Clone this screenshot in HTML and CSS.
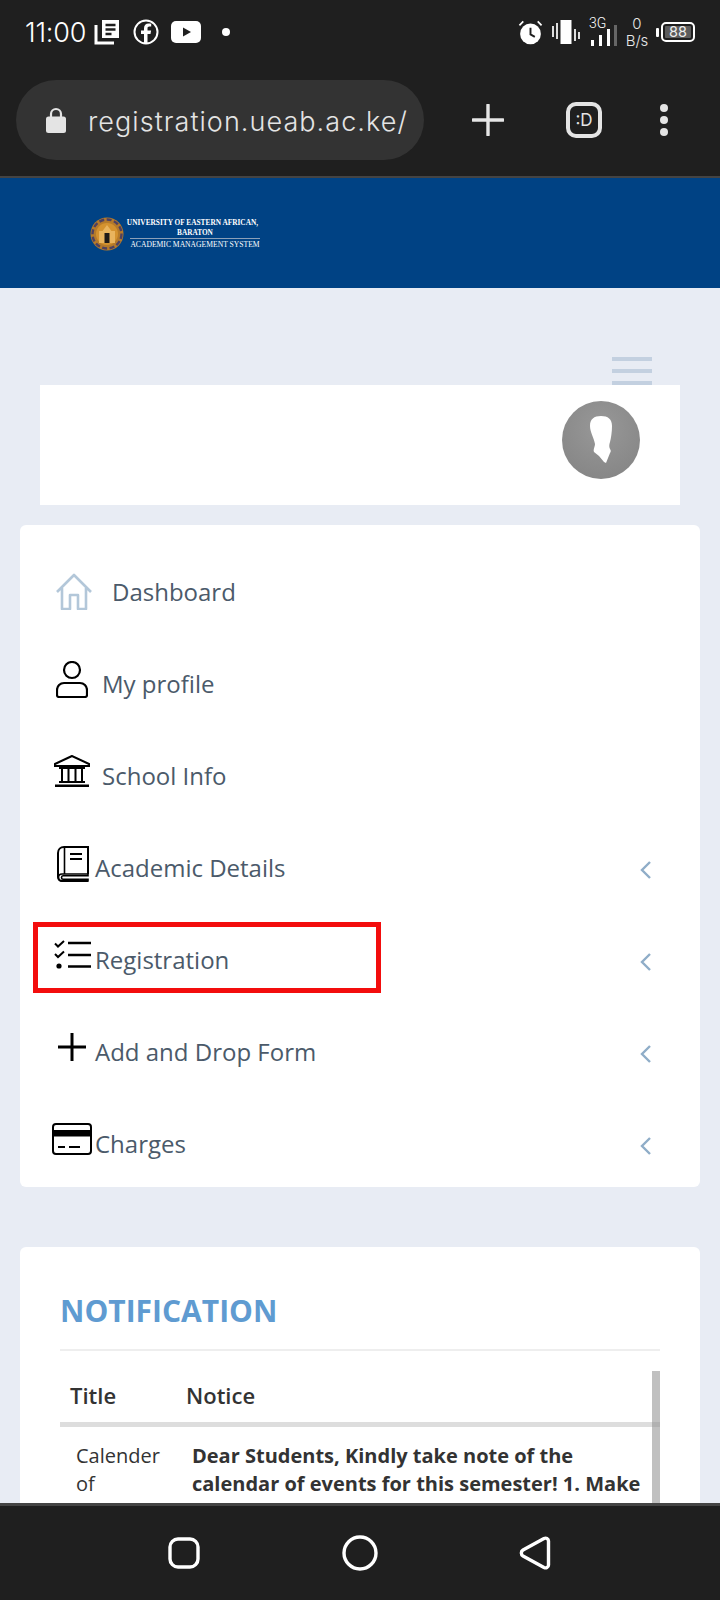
FILE: index.html
```html
<!DOCTYPE html>
<html lang="en">
<head>
<meta charset="utf-8">
<title>UEAB Academic Management System</title>
<link rel="stylesheet" href="styles.css">
</head>
<body>
<div class="screen">
  <header class="chrome">
    <div class="status">
      <div class="status-left">
        <span class="time">11:00</span>
        <svg class="st-news" viewBox="0 0 26 26"><path d="M8 1h17v18H8z" fill="#fff"/><path d="M11.500 6h10M11.500 10.500h10M11.500 15h6" stroke="#1f1f1f" stroke-width="2.400"/><path d="M2 6v18h18" fill="none" stroke="#fff" stroke-width="3"/></svg>
        <svg class="st-fb" viewBox="0 0 26 26"><circle cx="13" cy="13" r="11.500" fill="none" stroke="#fff" stroke-width="2"/><path d="M14.500 25V15h3l.6-3.500h-3.600V9.500c0-1.200.5-1.900 1.900-1.900h1.800V4.700c-.8-.1-1.700-.2-2.500-.2-2.900 0-4.700 1.700-4.700 4.700v2.300H8V15h3v10z" fill="#fff"/></svg>
        <svg class="st-yt" viewBox="0 0 30 22"><rect width="30" height="22" rx="5" fill="#fff"/><path d="M12 6.500l8 4.500-8 4.500z" fill="#1f1f1f"/></svg>
        <span class="st-dot"></span>
      </div>
      <div class="status-right">
        <svg class="st-alarm" viewBox="0 0 26 26"><circle cx="13" cy="14.500" r="10.800" fill="#fff"/><path d="M13 8v7l4.500 2.500" fill="none" stroke="#1f1f1f" stroke-width="2"/><path d="M1.500 5.500L5.500 1.500M24.500 5.500L20.500 1.500" stroke="#fff" stroke-width="1.800"/></svg>
        <svg class="st-vib" viewBox="0 0 28 26"><path d="M8.500 1h11v24h-11z" fill="#fff"/><path d="M0 7h2v11H0zM4 4h2v16H4zM22 10h2v12h-2zM26 13h2v7h-2z" fill="#ddd"/></svg>
        <div class="st-net">
          <span class="st-3g">3G</span>
          <svg class="st-bars" viewBox="0 0 28 21"><path d="M2 15h3v6H2zM10 10h3v11h-3zM18 4h3v17h-3z" fill="#fff"/><path d="M25 0h3v21h-3z" fill="#666"/></svg>
        </div>
        <div class="st-speed"><span>0</span><span>B/s</span></div>
        <div class="st-batt"><span class="st-nub"></span><span class="st-cell"><span class="st-level">88</span></span></div>
      </div>
    </div>
    <div class="toolbar">
      <div class="urlbar">
        <svg class="lock" viewBox="0 0 20 26"><path d="M5 11V7a5 5 0 0 1 10 0v4" fill="none" stroke="#e4e4e4" stroke-width="2.200"/><rect y="9.500" width="20" height="16.500" rx="2.500" fill="#e4e4e4"/></svg>
        <span class="url">registration.ueab.ac.ke/</span>
      </div>
      <svg class="tb-plus" viewBox="0 0 32 32"><path d="M16 1v30M1 16h30" stroke="#e6e6e6" stroke-width="3.400" stroke-linecap="round"/></svg>
      <div class="tab-count"><span>:D</span></div>
      <div class="tb-menu"><i></i><i></i><i></i></div>
    </div>
  </header>

  <div class="banner">
    <div class="logo">
      <svg class="seal" viewBox="0 0 34 34"><circle cx="17" cy="17" r="16.500" fill="#b57a2a"/><circle cx="17" cy="17" r="14.500" fill="none" stroke="#4f4160" stroke-width="2.400" stroke-dasharray="5 2.500"/><circle cx="17" cy="17" r="11" fill="#d4922f"/><path d="M9 26V14h3.500L17 8l4.500 6H25v12z" fill="#e9b45e"/><path d="M14.500 26v-10h5v10z" fill="#1f1a17"/></svg>
      <div class="logo-text">
        <span class="logo-l1">UNIVERSITY OF EASTERN AFRICAN,</span>
        <span class="logo-l2">BARATON</span>
        <span class="logo-l3">ACADEMIC MANAGEMENT SYSTEM</span>
      </div>
    </div>
  </div>

  <main class="page">
    <div class="topbar">
      <div class="burger"><i></i><i></i><i></i></div>
      <div class="user-card">
        <div class="avatar">
          <svg viewBox="0 0 78 78"><path d="M28 25c0-7 4-10 11-10s11 3 11 10c0 6-1 12-2 16-1 3-1 5 0 7 1 1 1 3 0 4l-4 10-2-1-5-6-5-4c-1-3 1-5 1-8-1-6-5-12-5-18z" fill="#fff"/></svg>
        </div>
      </div>
    </div>

    <nav class="menu">
      <a class="row">
        <svg class="ico ico-home" viewBox="0 0 36 37"><path d="M1 19L18 2l17 17M6 15v21h8V22h8v14h8V15" fill="none" stroke="#b3c7d9" stroke-width="2.600" stroke-linejoin="round"/></svg>
        <span class="lbl">Dashboard</span>
      </a>
      <a class="row">
        <svg class="ico ico-person" viewBox="0 0 32 37"><circle cx="16" cy="9" r="8" fill="none" stroke="#000" stroke-width="2.200"/><path d="M8 22h16a7 7 0 0 1 7 7v5a2 2 0 0 1-2 2H3a2 2 0 0 1-2-2v-5a7 7 0 0 1 7-7z" fill="none" stroke="#000" stroke-width="2.200"/></svg>
        <span class="lbl">My profile</span>
      </a>
      <a class="row">
        <svg class="ico ico-school" viewBox="0 0 36 32"><path d="M18 1L1 9v2h34V9z" fill="none" stroke="#000" stroke-width="2"/><path d="M5 12h26v2H5z" fill="#000"/><path d="M8 14v12M14.500 14v12M21.500 14v12M28 14v12" stroke="#000" stroke-width="2"/><path d="M5 26h26v2H5zM1 29.500h34V32H1z" fill="#000"/></svg>
        <span class="lbl">School Info</span>
      </a>
      <a class="row">
        <svg class="ico ico-book" viewBox="0 0 32 36"><path d="M31 28V1H7C3.500 1 1 3.500 1 7v24c0 2.500 2 4 4 4h26" fill="none" stroke="#000" stroke-width="2"/><path d="M5 35c-2 0-3.500-1.500-3.500-3.500S3 28 5 28h26v1.800H6c-2 0-2 3.400 0 3.400h25V35zM7.500 1v27" fill="none" stroke="#000" stroke-width="1.600"/><path d="M13 8h12M13 13h12" stroke="#000" stroke-width="2"/></svg>
        <span class="lbl">Academic Details</span>
        <svg class="chev" viewBox="0 0 11 18"><path d="M10 1L2 9l8 8" fill="none" stroke="#8fadc8" stroke-width="2.400"/></svg>
      </a>
      <a class="row row-marked">
        <svg class="ico ico-reg" viewBox="0 0 37 30"><path d="M1 3.500l3 3 6-5.500M1 14l3 3 6-5.500" fill="none" stroke="#000" stroke-width="2"/><circle cx="5" cy="26" r="2.600" fill="#000"/><path d="M14 3h23M14 15h23M14 26.500h23" stroke="#000" stroke-width="2.400"/></svg>
        <span class="lbl">Registration</span>
        <svg class="chev" viewBox="0 0 11 18"><path d="M10 1L2 9l8 8" fill="none" stroke="#8fadc8" stroke-width="2.400"/></svg>
        <span class="marker"></span>
      </a>
      <a class="row">
        <svg class="ico ico-plus" viewBox="0 0 28 28"><path d="M14 0v28M0 14h28" stroke="#000" stroke-width="3"/></svg>
        <span class="lbl">Add and Drop Form</span>
        <svg class="chev" viewBox="0 0 11 18"><path d="M10 1L2 9l8 8" fill="none" stroke="#8fadc8" stroke-width="2.400"/></svg>
      </a>
      <a class="row row-last">
        <svg class="ico ico-card" viewBox="0 0 40 32"><rect x="1" y="1" width="38" height="30" rx="3" fill="none" stroke="#000" stroke-width="2"/><path d="M1 7h38v6.500H1z" fill="#000"/><path d="M6 24h7M17 24h11" stroke="#000" stroke-width="2"/></svg>
        <span class="lbl">Charges</span>
        <svg class="chev" viewBox="0 0 11 18"><path d="M10 1L2 9l8 8" fill="none" stroke="#8fadc8" stroke-width="2.400"/></svg>
      </a>
    </nav>

    <section class="notice-card">
      <h2 class="notice-title">NOTIFICATION</h2>
      <div class="table-wrap">
        <table class="notice-table">
          <thead>
            <tr><th class="col-title">Title</th><th>Notice</th></tr>
          </thead>
          <tbody>
            <tr>
              <td class="cell-title">Calender of</td>
              <td class="cell-notice">Dear Students, Kindly take note of the calendar of events for this semester! 1. Make</td>
            </tr>
          </tbody>
        </table>
        <span class="scrollbar"></span>
      </div>
    </section>
  </main>

  <footer class="navbar">
    <svg class="nav-square" viewBox="0 0 32 32"><rect x="2" y="2" width="28" height="28" rx="8" fill="none" stroke="#fff" stroke-width="3.400"/></svg>
    <svg class="nav-circle" viewBox="0 0 36 36"><circle cx="18" cy="18" r="16" fill="none" stroke="#fff" stroke-width="3.400"/></svg>
    <svg class="nav-back" viewBox="0 0 32 36"><path d="M25 3.500L4 15c-2.200 1.300-2.200 4.700 0 6l21 11.500c2 1 4.500 0 4.500-2.500V6c0-2.500-2.500-3.500-4.500-2.500z" fill="none" stroke="#fff" stroke-width="3.400" stroke-linejoin="round"/></svg>
  </footer>
</div>
</body>
</html>
```
FILE: styles.css
```css
* { box-sizing: border-box; }
html, body { margin: 0; padding: 0; }
body { font-family: "Open Sans", sans-serif; background: #e8ecf4; }
svg { display: block; flex: none; }

.screen { display: flex; flex-direction: column; width: 720px; height: 1600px; overflow: hidden; }

/* phone + browser chrome */
.chrome { height: 178px; flex: none; background: #1f1f1f; border-bottom: 2px solid #444; }
.status { display: flex; justify-content: space-between; align-items: center; height: 64px; padding: 0 25px; }
.status-left, .status-right { display: flex; align-items: center; }
.time { font-family: Inter, sans-serif; font-size: 27px; font-weight: 300; color: #fff; width: 69px; letter-spacing: -.2px; }
.st-news { width: 26px; height: 26px; margin-right: 13px; }
.st-fb { width: 26px; height: 26px; margin-right: 12px; }
.st-yt { width: 30px; height: 22px; margin-right: 21px; }
.st-dot { width: 8px; height: 8px; border-radius: 50%; background: #fff; }

.st-alarm { width: 25px; height: 25px; margin-right: 9px; }
.st-vib { width: 28px; height: 26px; margin-right: 9px; }
.st-net { display: flex; flex-direction: column; width: 28px; height: 28px; margin-right: 7px; }
.st-3g { font-family: Roboto, sans-serif; font-size: 14px; font-weight: 300; line-height: 11px; color: #fff; height: 11px; }
.st-bars { width: 28px; height: 21px; margin-top: -4px; }
.st-speed { display: flex; flex-direction: column; align-items: center; width: 26px; font-family: Inter, sans-serif; font-size: 15px; line-height: 17px; color: #e8e8e8; margin-right: 6px; font-weight: 300; }
.st-batt { display: flex; align-items: center; }
.st-nub { width: 3px; height: 9px; background: #fff; border-radius: 1px; margin-right: 2px; }
.st-cell { display: flex; width: 34px; height: 20px; border: 2px solid #fff; border-radius: 5px; padding: 2px; }
.st-level { display: flex; align-items: center; justify-content: center; flex: 1; background: #5c5c5c; border-radius: 1px; font-family: Inter, sans-serif; font-size: 14.500px; line-height: 1; color: #eee; }

.toolbar { display: flex; align-items: center; height: 80px; margin-top: 16px; padding-left: 16px; }
.urlbar { display: flex; align-items: center; flex: none; width: 408px; height: 80px; border-radius: 40px; background: #333; padding-left: 30px; }
.lock { width: 20px; height: 26px; margin-right: 22px; }
.url { font-family: Inter, sans-serif; font-size: 27px; line-height: 32px; padding-top: 4px; font-weight: 300; letter-spacing: 1.050px; color: #e4e4e4; white-space: nowrap; }
.tb-plus { width: 32px; height: 32px; margin-left: 48px; }
.tab-count { display: flex; align-items: center; justify-content: center; width: 36px; height: 36px; margin-left: 62px; border: 4px solid #e4e4e4; border-radius: 10px; font-family: Inter, sans-serif; font-size: 17px; color: #e4e4e4; }
.tb-menu { display: flex; flex-direction: column; gap: 4px; margin-left: 58px; }
.tb-menu i { width: 8px; height: 8px; border-radius: 50%; background: #e4e4e4; }

/* site banner */
.banner { flex: none; height: 110px; background: #004284; padding: 39px 0 0 90px; }
.logo { display: flex; align-items: center; }
.seal { width: 34px; height: 34px; margin-right: 1px; }
.logo-text { display: flex; flex-direction: column; align-items: center; width: 135px; font-family: "Liberation Serif", serif; color: #fff; white-space: nowrap; }
.logo-l1 { font-size: 7.350px; font-weight: 700; line-height: 10px; }
.logo-l2 { font-size: 7.300px; font-weight: 700; line-height: 9px; width: 130px; margin-left: 5px; text-align: center; border-bottom: 1px solid #8ba0b8; height: 11px; }
.logo-l3 { font-size: 7.620px; line-height: 12px; margin-left: 5px; }

/* page */
.page { flex: 1; min-height: 0; overflow: hidden; padding: 69px 20px 0; }
.topbar { height: 148px; }
.burger { display: flex; flex-direction: column; gap: 8px; width: 40px; margin-left: 592px; }
.burger i { height: 4px; background: #c3d0e0; }
.user-card { display: flex; justify-content: flex-end; align-items: center; width: 640px; height: 120px; margin-left: 20px; background: #fff; padding: 0 40px 10px 0; }
.avatar { width: 78px; height: 78px; border-radius: 50%; background: radial-gradient(circle at 50% 35%, #989898, #828282); }

.menu { display: flex; flex-direction: column; height: 662px; margin-top: 20px; padding-top: 21px; background: #fff; border-radius: 6px; overflow: hidden; }
.row { display: flex; align-items: center; flex: none; height: 92px; padding: 0 49px 0 33px; position: relative; }
.lbl { font-size: 24px; line-height: 32px; color: #4b5a6a; white-space: nowrap; }
.chev { width: 11px; height: 18px; margin: 4px 0 0 auto; }
.ico-home { width: 36px; height: 37px; margin: -2px 20px 0 3px; }
.ico-person { width: 32px; height: 37px; margin: -10px 14px 0 3px; }
.ico-school { width: 36px; height: 32px; margin: -10px 12px 0 1px; }
.ico-book { width: 32px; height: 36px; margin: -8px 6px 0 4px; }
.ico-reg { width: 37px; height: 30px; margin: -10px 4px 0 1px; }
.ico-plus { width: 28px; height: 28px; margin: -10px 9px 0 5px; }
.ico-card { width: 40px; height: 32px; margin: -10px 3px 0 -1px; }
.marker { position: absolute; left: 13px; top: 8px; width: 348px; height: 71px; border: 5px solid #f30d0d; }

.notice-card { margin-top: 60px; padding: 40px 40px 0; background: #fff; border-radius: 6px; height: 400px; }
.notice-title { margin: 0; padding-bottom: 14px; font-size: 30px; line-height: 48px; font-weight: 700; color: #5f9bd1; border-bottom: 2px solid #eee; }
.table-wrap { position: relative; margin-top: 20px; }
.notice-table { width: 600px; border-collapse: collapse; table-layout: fixed; }
.notice-table th { padding: 9px 10px 0; height: 53px; vertical-align: top; text-align: left; font-size: 22px; line-height: 30px; font-weight: 600; color: #333; border-bottom: 5px solid #ddd; }
.notice-table .col-title { width: 116px; }
.notice-table td { padding: 15px 16px; vertical-align: top; font-size: 20px; line-height: 28px; color: #333; }
.cell-title { font-weight: 400; color: #444; }
.notice-table .cell-notice { font-weight: 700; padding-left: 16px; padding-right: 12px; }
.scrollbar { position: absolute; top: 0; right: 0; width: 8px; height: 300px; background: rgba(140,140,140,.55); }

.navbar { flex: none; display: flex; align-items: center; height: 97px; background: #1f1f1f; border-top: 3px solid #444; padding-left: 168px; }
.nav-square { width: 32px; height: 32px; margin-right: 142px; }
.nav-circle { width: 36px; height: 36px; margin-right: 141px; }
.nav-back { width: 32px; height: 36px; }
```
